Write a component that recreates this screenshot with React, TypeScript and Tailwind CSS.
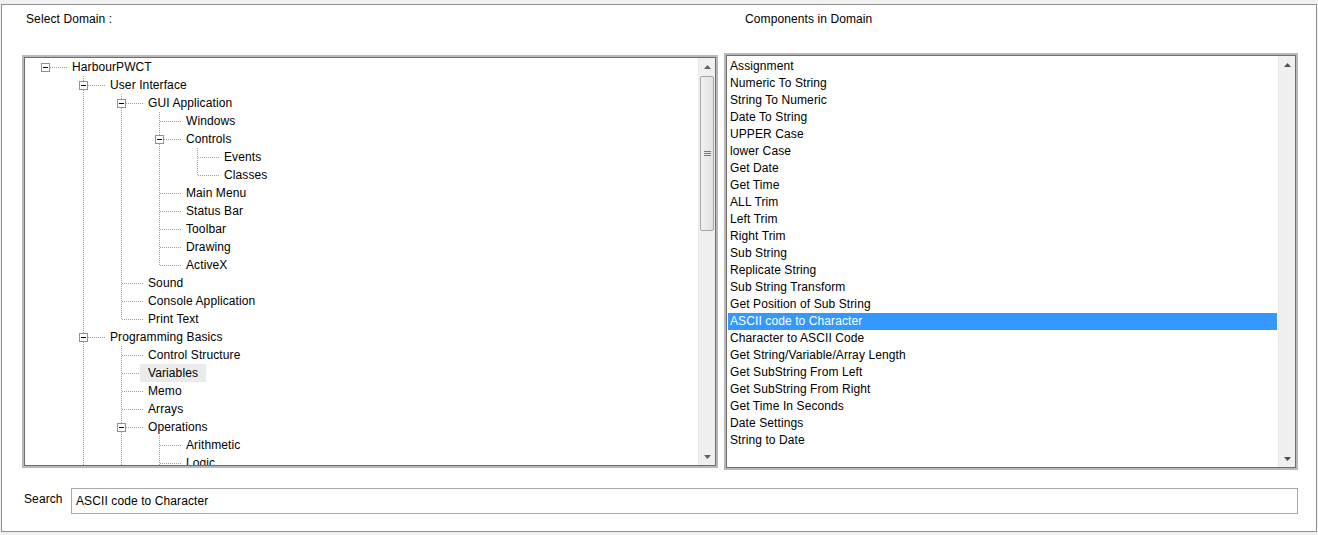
import React from "react";

type TreeItem = [number, string, boolean, boolean]; // level, label, expandable, last sibling

const treeItems: TreeItem[] = [
  [0, "HarbourPWCT", true, true],
  [1, "User Interface", true, false],
  [2, "GUI Application", true, false],
  [3, "Windows", false, false],
  [3, "Controls", true, false],
  [4, "Events", false, false],
  [4, "Classes", false, true],
  [3, "Main Menu", false, false],
  [3, "Status Bar", false, false],
  [3, "Toolbar", false, false],
  [3, "Drawing", false, false],
  [3, "ActiveX", false, true],
  [2, "Sound", false, false],
  [2, "Console Application", false, false],
  [2, "Print Text", false, true],
  [1, "Programming Basics", true, false],
  [2, "Control Structure", false, false],
  [2, "Variables", false, false],
  [2, "Memo", false, false],
  [2, "Arrays", false, false],
  [2, "Operations", true, false],
  [3, "Arithmetic", false, false],
  [3, "Logic", false, false],
];

const components = [
  "Assignment",
  "Numeric To String",
  "String To Numeric",
  "Date To String",
  "UPPER Case",
  "lower Case",
  "Get Date",
  "Get Time",
  "ALL Trim",
  "Left Trim",
  "Right Trim",
  "Sub String",
  "Replicate String",
  "Sub String Transform",
  "Get Position of Sub String",
  "ASCII code to Character",
  "Character to ASCII Code",
  "Get String/Variable/Array Length",
  "Get SubString From Left",
  "Get SubString From Right",
  "Get Time In Seconds",
  "Date Settings",
  "String to Date",
];

const LINE = "#a0a0a0";

const VLine = ({ show }: { show: boolean }) => (
  <svg width="38" height="18" className="shrink-0">
    {show && <line x1="19.5" y1="0" x2="19.5" y2="18" stroke={LINE} strokeDasharray="1 1" />}
  </svg>
);

const Connector = ({ level, expandable, last }: { level: number; expandable: boolean; last: boolean }) => (
  <svg width="42" height="18" className="shrink-0">
    {level > 0 && (
      <line x1="19.5" y1="0" x2="19.5" y2={last ? 9 : 18} stroke={LINE} strokeDasharray="1 1" />
    )}
    <line x1="20" y1="9.5" x2="42" y2="9.5" stroke={LINE} strokeDasharray="1 1" />
    {expandable && (
      <g>
        <rect x="15.5" y="5.5" width="8" height="8" fill="#fff" stroke="#919191" />
        <line x1="17" y1="9.5" x2="22" y2="9.5" stroke="#000" />
      </g>
    )}
  </svg>
);

const TreeView = () => {
  const cont: boolean[] = [];
  return (
    <div className="flex-1 overflow-hidden pl-px">
      {treeItems.map(([level, label, expandable, last], i) => {
        cont[level] = !last;
        const ancestors = [];
        for (let k = 0; k < level; k++) {
          ancestors.push(<VLine key={k} show={k > 0 && cont[k]} />);
        }
        const hot = label === "Variables";
        return (
          <div key={i} className="flex h-[18px] items-center">
            {ancestors}
            <Connector level={level} expandable={expandable} last={last} />
            <span
              className={
                "h-[18px] leading-[18px] whitespace-nowrap " +
                (hot ? "-ml-[4px] bg-[#ebebeb] pl-[8px] pr-[8px]" : "ml-[4px]")
              }
            >
              {label}
            </span>
          </div>
        );
      })}
    </div>
  );
};

const Arrow = ({ up, color }: { up: boolean; color: string }) => (
  <div className="flex h-[17px] items-center justify-center">
    <svg width="7" height="4">
      <path d={up ? "M0 4 L3.5 0 L7 4 Z" : "M0 0 L3.5 4 L7 0 Z"} fill={color} />
    </svg>
  </div>
);

const LeftScrollbar = () => (
  <div className="flex w-[17px] shrink-0 flex-col border-l border-[#e8e8e8] bg-[#f0f0f0]">
    <Arrow up color="#606060" />
    <div className="flex-1 px-px">
      <div className="mt-[1px] flex h-[155px] items-center justify-center rounded-[2px] border border-[#a4a4a4] bg-gradient-to-r from-[#f2f2f2] to-[#e2e2e2]">
        <div className="flex flex-col gap-[1px]">
          <div className="h-px w-[7px] bg-[#7a7a7a]" />
          <div className="h-px w-[7px] bg-[#7a7a7a]" />
          <div className="h-px w-[7px] bg-[#7a7a7a]" />
        </div>
      </div>
    </div>
    <Arrow up={false} color="#606060" />
  </div>
);

const RightScrollbar = () => (
  <div className="flex w-[17px] shrink-0 flex-col border-l border-[#e8e8e8] bg-[#f0f0f0]">
    <Arrow up color="#505050" />
    <div className="flex-1" />
    <Arrow up={false} color="#505050" />
  </div>
);

const Sunken = ({ className, children }: { className: string; children: React.ReactNode }) => (
  <div className={"border-2 border-[#b9b9b9] " + className}>
    <div className="flex h-full border border-[#6e6e6e] bg-white">{children}</div>
  </div>
);

export default function App() {
  return (
    <div
      className="h-[535px] w-[1318px] bg-[#f0f0f0] px-px pb-[3px] pt-[4px] text-[12px] tracking-[0.1px] text-black"
      style={{ fontFamily: '"Liberation Sans", Arial, sans-serif' }}
    >
      <div className="flex h-full flex-col border border-[#8f8f8f] bg-white">
        <div className="flex h-[48px] shrink-0 pl-[24px] pt-[5px]">
          <div className="w-[719px]">Select Domain :</div>
          <div>Components in Domain</div>
        </div>
        <div className="flex h-[417px] shrink-0 items-start pl-[20px]">
          <Sunken className="mt-[2px] h-[413px] w-[696px]">
            <TreeView />
            <LeftScrollbar />
          </Sunken>
          <Sunken className="ml-[6px] h-[417px] w-[574px]">
            <div className="flex-1 overflow-hidden px-px pt-[2px]">
              {components.map((c) => (
                <div
                  key={c}
                  className={
                    "h-[17px] pl-[2px] leading-[17px] whitespace-nowrap " +
                    (c === "ASCII code to Character" ? "bg-[#3399ff] text-white" : "")
                  }
                >
                  {c}
                </div>
              ))}
            </div>
            <RightScrollbar />
          </Sunken>
        </div>
        <div className="mt-[18px] flex h-[26px] shrink-0 pl-[22px]">
          <div className="w-[47px] pt-[2px]">Search</div>
          <div className="flex h-[26px] w-[1227px] items-center border border-[#a9a9a9] pl-[4px]">
            ASCII code to Character
          </div>
        </div>
      </div>
    </div>
  );
}
